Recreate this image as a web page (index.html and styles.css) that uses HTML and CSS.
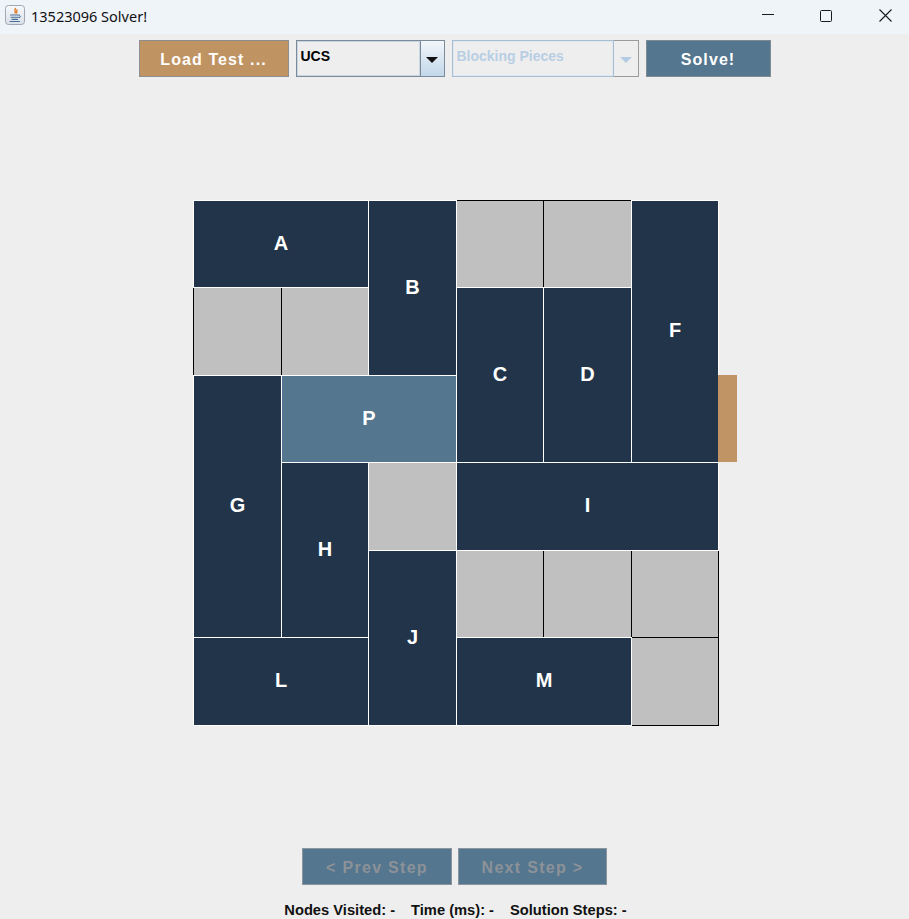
FILE: index.html
```html
<!DOCTYPE html>
<html lang="en">
<head>
<meta charset="utf-8">
<title>13523096 Solver!</title>
<link rel="stylesheet" href="styles.css">
</head>
<body>
<div class="titlebar">
  <svg class="app-icon" width="20" height="20" viewBox="0 0 20 20">
    <defs>
      <linearGradient id="ig" x1="0" y1="0" x2="0" y2="1">
        <stop offset="0" stop-color="#f7f9fb"/>
        <stop offset="1" stop-color="#d9e0e8"/>
      </linearGradient>
    </defs>
    <rect x="0.5" y="0.5" width="19" height="19" rx="3" fill="url(#ig)" stroke="#9ea7b2"/>
    <path d="M10.5 3.5c-2 1.5 1 2.5-0.5 4.5M12 5c-1 1 0.5 1.5-0.5 3" stroke="#e0761e" stroke-width="1.3" fill="none" stroke-linecap="round"/>
    <path d="M5.5 10h8.5M6 12.2h7.5M7 14.4h5.5M5 16.5h9.5" stroke="#4a6f98" stroke-width="1.1" fill="none" stroke-linecap="round"/>
    <path d="M14 10.5c1.8 0 1.8 2.2 0 2.2" stroke="#4a6f98" stroke-width="1" fill="none"/>
  </svg>
  <span class="title-text">13523096 Solver!</span>
  <div class="win-controls">
    <svg class="win-btn win-min" width="58" height="34" viewBox="0 0 58 34"><path d="M23 14.5h12" stroke="#1a1a1a" stroke-width="1"/></svg>
    <svg class="win-btn win-max" width="58" height="34" viewBox="0 0 58 34"><rect x="23.5" y="10.5" width="11" height="11" rx="1" fill="none" stroke="#1a1a1a" stroke-width="1"/></svg>
    <svg class="win-btn win-close" width="48" height="34" viewBox="0 0 48 34"><path d="M18.5 9.5l12 12M30.5 9.5l-12 12" stroke="#1a1a1a" stroke-width="1.1"/></svg>
  </div>
</div>

<div class="toolbar">
  <button class="btn btn-load">Load Test ...</button>
  <div class="combo combo-active">
    <div class="combo-field">UCS</div>
    <div class="combo-arrow"><span class="tri tri-dark"></span></div>
  </div>
  <div class="combo combo-disabled">
    <div class="combo-field">Blocking Pieces</div>
    <div class="combo-arrow"><span class="tri tri-light"></span></div>
  </div>
  <button class="btn btn-solve">Solve!</button>
</div>

<div class="board-area">
  <div class="board">
    <div class="cell e03"></div>
    <div class="cell e04"></div>
    <div class="cell e10"></div>
    <div class="cell e11"></div>
    <div class="cell e32"></div>
    <div class="cell e43"></div>
    <div class="cell e44"></div>
    <div class="cell e45"></div>
    <div class="cell e55"></div>

    <div class="piece pA">A</div>
    <div class="piece pB">B</div>
    <div class="piece pF">F</div>
    <div class="piece pC">C</div>
    <div class="piece pD">D</div>
    <div class="piece primary pP">P</div>
    <div class="piece pG">G</div>
    <div class="piece pH">H</div>
    <div class="piece pI">I</div>
    <div class="piece pJ">J</div>
    <div class="piece pL">L</div>
    <div class="piece pM">M</div>
    <div class="exit"></div>
  </div>
</div>

<div class="stepbar">
  <button class="btn btn-step">&lt; Prev Step</button>
  <button class="btn btn-step">Next Step &gt;</button>
</div>

<div class="status">
  <span>Nodes Visited: -</span>
  <span>Time (ms): -</span>
  <span>Solution Steps: -</span>
</div>
</body>
</html>
```

FILE: styles.css
```css
* { box-sizing: border-box; }

html, body {
  margin: 0;
  padding: 0;
  background: #eeeeee;
  width: 909px;
  height: 919px;
  overflow: hidden;
  font-family: "Liberation Sans", Arial, sans-serif;
}

.titlebar {
  height: 34px;
  background: #eff4f9;
  display: flex;
  align-items: center;
}

.app-icon {
  margin-left: 5px;
  margin-top: -4px;
  flex: none;
}

.title-text {
  margin-left: 6px;
  font-family: "Noto Sans", "Open Sans", sans-serif;
  font-size: 14.5px;
  color: #111111;
  margin-top: -2px;
}

.win-controls {
  margin-left: auto;
  display: flex;
  align-self: flex-start;
}

.win-btn {
  display: block;
}

.win-close { margin-left: 6px; }

.toolbar {
  margin-top: 6px;
  height: 37px;
  display: flex;
  justify-content: center;
  gap: 7px;
}

.btn {
  font-family: "Liberation Sans", Arial, sans-serif;
  font-weight: bold;
  font-size: 16px;
  letter-spacing: 1.1px;
  color: #ffffff;
  height: 37px;
  padding: 2px 0 0 0;
  margin: 0;
  display: flex;
  align-items: center;
  justify-content: center;
}

.btn-load {
  width: 150px;
  background: #c09363;
  border: 1px solid #8e8e8e;
}

.btn-solve {
  width: 125px;
  background: #54768f;
  border: 1px solid #808a93;
}

.combo {
  display: flex;
  height: 37px;
}

.combo-active {
  width: 149px;
  border: 1px solid #7a8b9c;
}

.combo-active .combo-field {
  flex: 1;
  background: #eeeeee;
  border: 1px solid #c9d5e1;
  color: #000000;
  font-weight: bold;
  font-size: 14px;
  padding: 0 0 5px 3px;
  display: flex;
  align-items: center;
}

.combo-active .combo-arrow {
  width: 24px;
  border-left: 1px solid #7a8b9c;
  background: linear-gradient(#f2f6fa, #c3d7ea);
  display: flex;
  align-items: center;
  justify-content: center;
}

.combo-disabled {
  width: 187px;
}

.combo-disabled .combo-field {
  flex: 1;
  background: #eeeeee;
  border: 1px solid #a7bdd3;
  box-shadow: inset 0 0 0 1px #dfe7ef;
  color: #b8cee4;
  font-weight: bold;
  font-size: 14px;
  padding: 0 0 5px 4px;
  display: flex;
  align-items: center;
}

.combo-disabled .combo-arrow {
  width: 25px;
  border: 1px solid #9a9a9a;
  border-left: none;
  background: #eeeeee;
  display: flex;
  align-items: center;
  justify-content: center;
}

.tri {
  width: 0;
  height: 0;
  border-left: 6px solid transparent;
  border-right: 6px solid transparent;
  margin-top: 3px;
}

.tri-dark { border-top: 6px solid #111111; }
.tri-light { border-top: 6px solid #b3cbe3; }

.board-area {
  margin-top: 123px;
  padding-left: 193px;
  display: flex;
}

.board {
  display: grid;
  grid-template-columns: 88px 87px 88px 87px 88px 87px 19px;
  grid-template-rows: 87px 88px 87px 88px 87px 88px;
}

.cell, .piece {
  margin-right: -1px;
  margin-bottom: -1px;
  border: 1px solid #000000;
}

.cell {
  background: #c0c0c0;
}

.piece {
  background: #213449;
  border-color: #ffffff;
  color: #ffffff;
  font-weight: bold;
  font-size: 20px;
  display: flex;
  align-items: center;
  justify-content: center;
  padding-bottom: 2px;
}

.piece.primary { background: #54768f; }

.exit {
  grid-column: 7 / 8;
  grid-row: 3 / 4;
  background: #c09464;
}

.e03 { grid-area: 1 / 4 / 2 / 5; }
.e04 { grid-area: 1 / 5 / 2 / 6; }
.e10 { grid-area: 2 / 1 / 3 / 2; }
.e11 { grid-area: 2 / 2 / 3 / 3; }
.e32 { grid-area: 4 / 3 / 5 / 4; }
.e43 { grid-area: 5 / 4 / 6 / 5; }
.e44 { grid-area: 5 / 5 / 6 / 6; }
.e45 { grid-area: 5 / 6 / 6 / 7; }
.e55 { grid-area: 6 / 6 / 7 / 7; }

.pA { grid-area: 1 / 1 / 2 / 3; }
.pB { grid-area: 1 / 3 / 3 / 4; }
.pF { grid-area: 1 / 6 / 4 / 7; }
.pC { grid-area: 2 / 4 / 4 / 5; }
.pD { grid-area: 2 / 5 / 4 / 6; }
.pP { grid-area: 3 / 2 / 4 / 4; }
.pG { grid-area: 3 / 1 / 6 / 2; }
.pH { grid-area: 4 / 2 / 6 / 3; }
.pI { grid-area: 4 / 4 / 5 / 7; }
.pJ { grid-area: 5 / 3 / 7 / 4; }
.pL { grid-area: 6 / 1 / 7 / 3; }
.pM { grid-area: 6 / 4 / 7 / 6; }

.stepbar {
  margin-top: 123px;
  display: flex;
  justify-content: center;
  gap: 6px;
}

.btn-step {
  width: 150px;
  background: #54768f;
  border: 1px solid #8c959d;
  color: #8c9298;
  letter-spacing: 1.3px;
}

.btn-step:last-child { width: 149px; }

.status {
  margin-top: 16px;
  display: flex;
  justify-content: center;
  gap: 16px;
  font-weight: bold;
  font-size: 14.7px;
  line-height: 18px;
  color: #111111;
  padding-left: 2px;
}
```
